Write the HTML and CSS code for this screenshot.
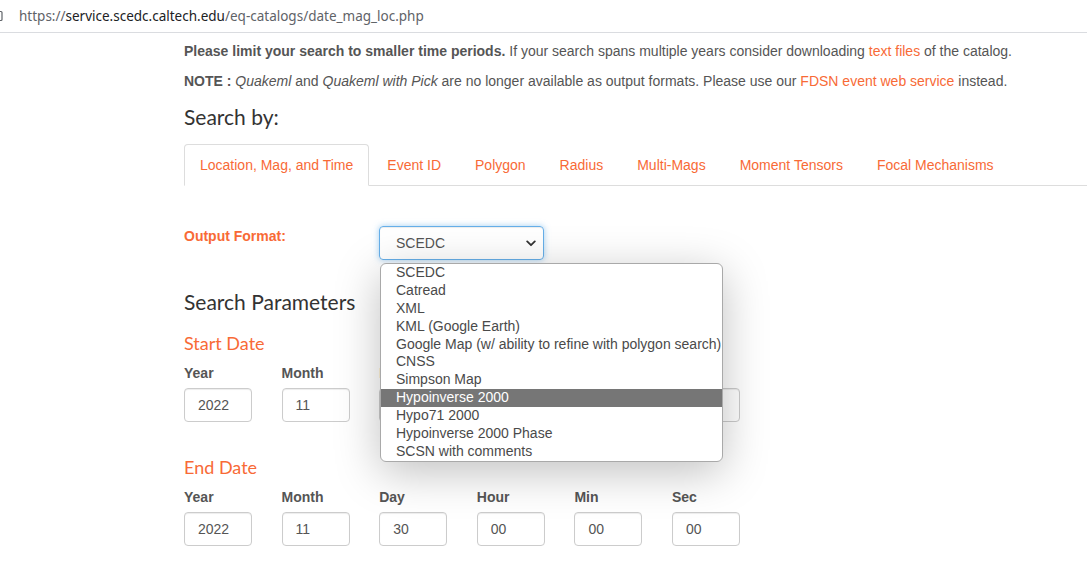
FILE: index.html
```html
<!DOCTYPE html>
<html>
<head>
<meta charset="utf-8">
<title>SCEDC Catalog Search</title>
<link rel="stylesheet" href="styles.css">
</head>
<body>
<div class="addressbar">
  <svg class="edge-icon" width="4" height="12" viewBox="0 0 4 12"><path d="M0 1.5 H2 Q3 1.5 3 2.5 V9.5 Q3 10.5 2 10.5 H0" fill="none" stroke="#5f6368" stroke-width="1.2"/></svg>
  <span class="url"><span class="dim">https://</span>service.scedc.caltech.edu<span class="dim">/eq-catalogs/date_mag_loc.php</span></span>
</div>
<main class="content">
  <p><b>Please limit your search to smaller time periods.</b> If your search spans multiple years consider downloading <a href="#">text files</a> of the catalog.</p>
  <p><b>NOTE :</b> <i>Quakeml</i> and <i>Quakeml with Pick</i> are no longer available as output formats. Please use our <a href="#">FDSN event web service</a> instead.</p>
  <h3 class="search-by">Search by:</h3>
  <ul class="tabs">
    <li class="tab active"><a href="#">Location, Mag, and Time</a></li>
    <li class="tab"><a href="#">Event ID</a></li>
    <li class="tab"><a href="#">Polygon</a></li>
    <li class="tab"><a href="#">Radius</a></li>
    <li class="tab"><a href="#">Multi-Mags</a></li>
    <li class="tab"><a href="#">Moment Tensors</a></li>
    <li class="tab"><a href="#">Focal Mechanisms</a></li>
  </ul>
  <div class="format-row">
    <label class="format-label">Output Format:</label>
    <div class="select-wrap">
      <div class="select">
        <span>SCEDC</span>
        <svg width="10" height="7" viewBox="0 0 10 7"><path d="M1.2 1.4 L5 5.2 L8.8 1.4" fill="none" stroke="#333" stroke-width="1.8" stroke-linecap="round" stroke-linejoin="round"/></svg>
      </div>
      <ul class="dropdown">
        <li>SCEDC</li>
        <li>Catread</li>
        <li>XML</li>
        <li>KML (Google Earth)</li>
        <li>Google Map (w/ ability to refine with polygon search)</li>
        <li>CNSS</li>
        <li>Simpson Map</li>
        <li class="hl">Hypoinverse 2000</li>
        <li>Hypo71 2000</li>
        <li>Hypoinverse 2000 Phase</li>
        <li>SCSN with comments</li>
      </ul>
    </div>
  </div>
  <h3 class="params">Search Parameters</h3>
  <h4 class="date-title">Start Date</h4>
  <div class="fields">
    <div class="field"><label>Year</label><div class="input">2022</div></div>
    <div class="field"><label>Month</label><div class="input">11</div></div>
    <div class="field"><label>Day</label><div class="input">01</div></div>
    <div class="field"><label>Hour</label><div class="input">00</div></div>
    <div class="field"><label>Min</label><div class="input">00</div></div>
    <div class="field"><label>Sec</label><div class="input">00</div></div>
  </div>
  <h4 class="date-title end">End Date</h4>
  <div class="fields">
    <div class="field"><label>Year</label><div class="input">2022</div></div>
    <div class="field"><label>Month</label><div class="input">11</div></div>
    <div class="field"><label>Day</label><div class="input">30</div></div>
    <div class="field"><label>Hour</label><div class="input">00</div></div>
    <div class="field"><label>Min</label><div class="input">00</div></div>
    <div class="field"><label>Sec</label><div class="input">00</div></div>
  </div>
</main>
</body>
</html>
```
FILE: styles.css
```css
* { box-sizing: border-box; }
html, body { margin: 0; padding: 0; background: #fff; overflow: hidden; }
body {
  font-family: "Liberation Sans", Arial, sans-serif;
  font-size: 14px;
  line-height: 20px;
  color: #555;
  width: 1087px;
  height: 574px;
}
.addressbar {
  height: 33px;
  border-bottom: 1px solid #dadce0;
  display: flex;
  align-items: center;
}
.edge-icon { margin-left: -1px; margin-top: -1px; }
.url {
  margin-left: 16px;
  font-family: "Noto Sans", "Open Sans", sans-serif;
  font-size: 13.5px;
  color: #202124;
  margin-top: -1px;
}
.url .dim { color: #5f6368; }
.content { padding-left: 184px; padding-top: 8px; }
p { margin: 0 0 10px; }
b { font-weight: bold; }
a { color: #f86a36; text-decoration: none; }
.search-by, .params {
  font-family: Lato, sans-serif;
  font-weight: 400;
  font-size: 21px;
  line-height: 24px;
  color: #333;
  margin: 0;
}
.search-by { margin-top: 14px; }
.tabs {
  list-style: none;
  margin: 15px 0 0;
  padding: 0;
  display: flex;
  border-bottom: 1px solid #ddd;
}
.tab { margin-right: 2px; margin-bottom: -1px; }
.tab a {
  display: block;
  padding: 10px 15px;
  line-height: 20px;
  border: 1px solid transparent;
  border-radius: 4px 4px 0 0;
}
.tab.active a { border-color: #ddd #ddd transparent; background: #fff; }
.format-row { display: flex; margin-top: 40px; }
.format-label {
  width: 195px;
  font-weight: bold;
  color: #f86a36;
}
.select-wrap { position: relative; }
.select {
  width: 165px;
  height: 34px;
  border: 1px solid #66afe9;
  border-radius: 4px;
  box-shadow: inset 0 1px 1px rgba(0,0,0,.075), 0 0 6px rgba(102,175,233,.6);
  display: flex;
  align-items: center;
  justify-content: space-between;
  padding: 0 7px 0 16px;
  color: #555;
}
.dropdown {
  position: absolute;
  left: 1px;
  top: 37px;
  width: 343px;
  margin: 0;
  padding: 0;
  list-style: none;
  background: #fff;
  border: 1px solid #a9a9a9;
  border-radius: 6px;
  box-shadow: 0 10px 45px rgba(0,0,0,.25);
  overflow: hidden;
  z-index: 10;
}
.dropdown li {
  line-height: 17.9px;
  height: 17.9px;
  padding-left: 15px;
  color: #4a4a4a;
  white-space: nowrap;
}
.dropdown li.hl { background: #767676; color: #fff; }
.params { margin-top: 30px; }
.date-title {
  font-family: Lato, sans-serif;
  font-weight: 400;
  font-size: 18px;
  line-height: 20px;
  color: #f86a36;
  margin: 19px 0 10px;
}
.date-title.end { margin-top: 35px; }
.fields { display: flex; }
.field { width: 97.6px; }
.field label { display: block; font-weight: bold; margin-bottom: 5px; color: #555; }
.input {
  width: 68px;
  height: 34px;
  border: 1px solid #ccc;
  border-radius: 4px;
  padding: 6px 13px;
  box-shadow: inset 0 1px 1px rgba(0,0,0,.075);
  color: #555;
}
```
